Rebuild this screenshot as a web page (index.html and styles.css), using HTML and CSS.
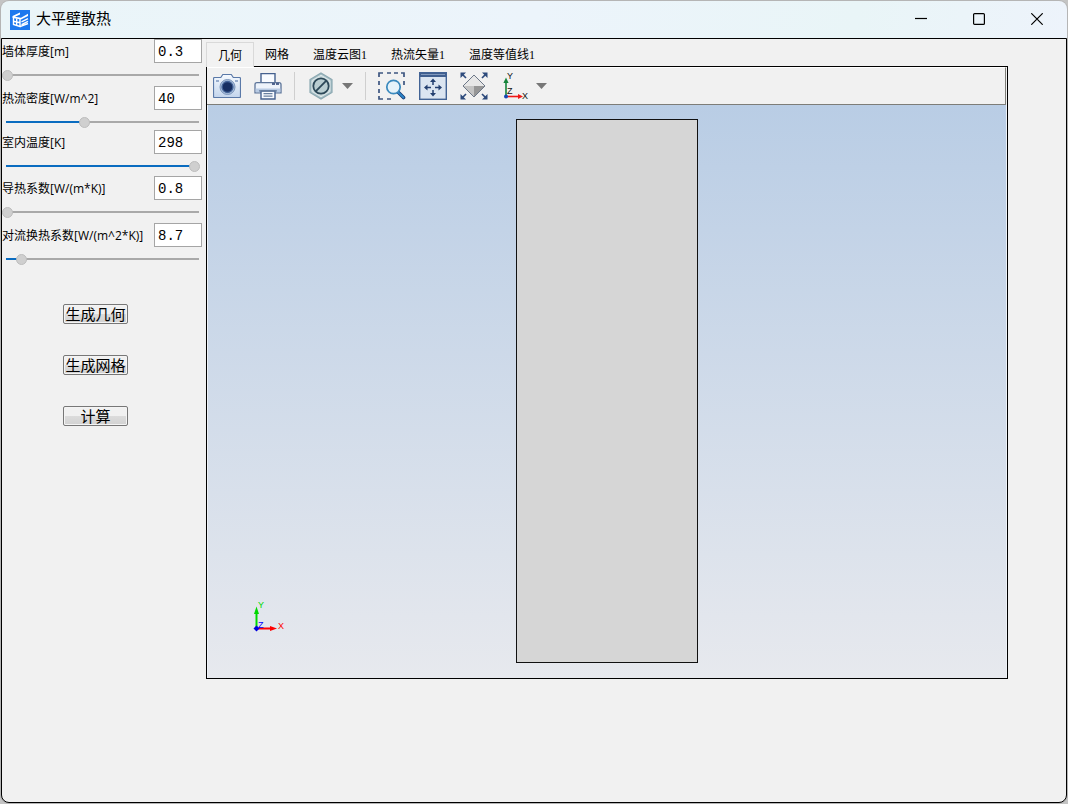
FILE: index.html
```html
<!DOCTYPE html>
<html lang="zh-CN">
<head>
<meta charset="utf-8">
<title>大平壁散热</title>
<link rel="stylesheet" href="styles.css">
</head>
<body>
<div class="window">
  <header class="titlebar">
    <svg class="logo" viewBox="0 0 20 20" aria-hidden="true">
      <rect width="20" height="20" fill="#1c78ee"/>
      <path d="M2.500 6 10 2.500v2L5 6.700l6 1.100 7-4v2.200l-7 3.500L2.500 8z" fill="#fff"/>
      <path d="M3.500 7.500v7l6.500 2V9M6.700 8.500v7M3.500 11.300l6.500 1.500M11.500 11.800 18 8.700M11.500 14.600l6.500-3.200M10 16.700l8-3.200" fill="none" stroke="#fff" stroke-width="1.400"/>
    </svg>
    <h1 class="title">大平壁散热</h1>
    <div class="controls">
      <button class="control" aria-label="最小化"><svg viewBox="0 0 12 12"><path d="M0 5.500h12"/></svg></button>
      <button class="control" aria-label="最大化"><svg viewBox="0 0 12 12"><rect x=".6" y=".6" width="10.800" height="10.800" rx="1"/></svg></button>
      <button class="control" aria-label="关闭"><svg viewBox="0 0 12 12"><path d="M.3.3l11.400 11.400M11.700.3.3 11.700"/></svg></button>
    </div>
  </header>

  <main class="content">
    <form class="panel">
      <div class="fields">
        <div class="field">
          <label for="thick">墙体厚度[m]</label>
          <input class="value" id="thick" type="text" value="0.3">
          <input class="slider" type="range" aria-label="墙体厚度" min="0" max="1000" value="0" style="--fill:0%">
        </div>
        <div class="field">
          <label for="flux">热流密度[W/m^2]</label>
          <input class="value" id="flux" type="text" value="40">
          <input class="slider" type="range" aria-label="热流密度" min="0" max="1000" value="410" style="--fill:41%">
        </div>
        <div class="field">
          <label for="temp">室内温度[K]</label>
          <input class="value" id="temp" type="text" value="298">
          <input class="slider" type="range" aria-label="室内温度" min="0" max="1000" value="1000" style="--fill:98%">
        </div>
        <div class="field">
          <label for="cond">导热系数[W/(m*K)]</label>
          <input class="value" id="cond" type="text" value="0.8">
          <input class="slider" type="range" aria-label="导热系数" min="0" max="1000" value="0" style="--fill:0%">
        </div>
        <div class="field">
          <label for="conv">对流换热系数[W/(m^2*K)]</label>
          <input class="value" id="conv" type="text" value="8.7">
          <input class="slider" type="range" aria-label="对流换热系数" min="0" max="1000" value="75" style="--fill:8%">
        </div>
      </div>
      <div class="actions">
        <button class="action" type="button">生成几何</button>
        <button class="action" type="button">生成网格</button>
        <button class="action" type="button">计算</button>
      </div>
    </form>

    <section class="viewer">
      <nav class="tabs" role="tablist">
        <button class="tab tab-active" role="tab" aria-selected="true">几何</button>
        <button class="tab" role="tab">网格</button>
        <button class="tab" role="tab">温度云图1</button>
        <button class="tab" role="tab">热流矢量1</button>
        <button class="tab" role="tab">温度等值线1</button>
      </nav>
      <div class="frame">
        <div class="toolbar">
          <button class="tool" aria-label="截图">
            <svg width="28" height="28" viewBox="0 0 28 28">
              <defs><linearGradient id="cam" x2="0" y2="1"><stop stop-color="#f6faff"/><stop offset="1" stop-color="#c3d5ec"/></linearGradient></defs>
              <path d="M1.500 5.500h6.300l2-3h8.500l2 3h6.200q1 0 1 1v18q0 1-1 1h-25q-1 0-1-1v-18q0-1 1-1z" fill="url(#cam)" stroke="#5a79a8" stroke-width="1.200"/>
              <path d="M3 9h3M22 9h3" stroke="#7d97bf" stroke-width="1.500"/>
              <circle cx="14.500" cy="15" r="7.500" fill="#a9bfdc" stroke="#7b95bb"/>
              <circle cx="14.500" cy="15" r="5.500" fill="#172f62" stroke="#45659a" stroke-width="1.300"/>
            </svg>
          </button>
          <button class="tool" aria-label="打印">
            <svg width="28" height="28" viewBox="0 0 28 28">
              <path d="M7 11V1.600h14V11" fill="#f8fbff" stroke="#45618f" stroke-width="1.400"/>
              <path d="M3 10.600h22q2 0 2 2v8.200H1v-8.200q0-2 2-2z" fill="#edf3fb" stroke="#5c7499" stroke-width="1.300"/>
              <path d="M1.600 16.500h24.800v3.800H1.600z" fill="#b8cbe4"/>
              <path d="M18 12h3M22 12h3" stroke="#233d70" stroke-width="1.500"/>
              <path d="M7 19h14v8H7z" fill="#f8fbff" stroke="#45618f" stroke-width="1.400"/>
              <path d="M5 18.800h18M9.500 21.700h9M9.500 24.200h9" stroke="#68809f" stroke-width="1.300"/>
            </svg>
          </button>
          <span class="separator"></span>
          <button class="tool" aria-label="选择过滤">
            <svg width="28" height="28" viewBox="0 0 28 28">
              <path d="M14 1 25 7.500v13L14 27 3 20.500V7.500z" fill="#a5bdc4" stroke="#8ca9b2" stroke-width="1.200"/>
              <path d="M14 3.200 23 8.500v11L14 24.800 5 19.500v-11z" fill="#c9d9dc" stroke="#dde8ea"/>
              <circle cx="14" cy="14" r="7.700" fill="#b9cdd1" stroke="#2c4858" stroke-width="1.800"/>
              <path d="M8.700 19.300 19.300 8.700" stroke="#2c4858" stroke-width="1.800"/>
            </svg>
            <svg class="caret" width="12" height="6" viewBox="0 0 12 6"><path d="M1 0h11L6.500 6z"/></svg>
          </button>
          <span class="separator"></span>
          <button class="tool" aria-label="框选缩放">
            <svg width="28" height="28" viewBox="0 0 28 28">
              <path d="M1 5V1h4M9 1h4M16 1h4M23 1h3v4M1 9v4M1 17v4M1 24v3h4M26 9v4M9 27h4" fill="none" stroke="#3c5580" stroke-width="1.700"/>
              <path d="M20.500 20.500 25.500 25.500" stroke="#173a75" stroke-width="3.600" stroke-linecap="round"/>
              <path d="M20.500 20.500 25.500 25.500" stroke="#2c87c9" stroke-width="1.800" stroke-linecap="round"/>
              <circle cx="15.500" cy="15" r="6.700" fill="#e6f3fa" stroke="#3a89bd" stroke-width="1.700"/>
            </svg>
          </button>
          <button class="tool" aria-label="适应窗口">
            <svg width="28" height="28" viewBox="0 0 28 28">
              <rect x=".7" y=".7" width="26.600" height="26.600" fill="#dbe5f1" stroke="#426395" stroke-width="1.400"/>
              <path d="M1 1h26v4H1z" fill="#405f8f"/>
              <path d="M2 2.500h24" stroke="#8199bd"/>
              <path d="M14 8v5M14 18v5M7 15.500h5M16 15.500h5" stroke="#233f70" stroke-width="1.500"/>
              <path d="M14 6.500 17 10h-6zM14 24.500 17 21h-6zM5 15.500 8.500 12.500v6zM23 15.500 19.500 12.500v6z" fill="#233f70"/>
            </svg>
          </button>
          <button class="tool" aria-label="全部显示">
            <svg width="28" height="28" viewBox="0 0 28 28">
              <path d="M14 3 25 14H3z" fill="#e7e7e7"/>
              <path d="M3 14h11v11z" fill="#c4c4c4"/><path d="M14 14h11L14 25z" fill="#969696"/>
              <path d="M14 3 25 14 14 25 3 14z" fill="none" stroke="#6d7888"/>
              <path d="M2 2l4 4M26 2l-4 4M2 26l4-4M26 26l-4-4" stroke="#2d4a7c" stroke-width="1.700"/>
              <path d="M.5.5h5.500L.5 6zM27.500.5H22L27.500 6zM.5 27.500H6L.5 22zM27.500 27.500H22l5.500-5.500z" fill="#2d4a7c"/>
            </svg>
          </button>
          <button class="tool" aria-label="视图方向">
            <svg width="28" height="28" viewBox="0 0 28 28">
              <path d="M5 25V10" stroke="#16853b" stroke-width="1.600"/><path d="M5 5.500 7.600 11H2.400z" fill="#16853b"/>
              <path d="M5 24.500h14" stroke="#f01818" stroke-width="1.600"/><path d="M22 24.500 17 22v5z" fill="#f01818"/>
              <circle cx="5" cy="24.500" r="2" fill="#1646b5"/>
              <g class="axis-name"><text x="6" y="7">Y</text><text x="6" y="22">Z</text><text x="21" y="27">X</text></g>
            </svg>
            <svg class="caret" width="12" height="6" viewBox="0 0 12 6"><path d="M1 0h11L6.500 6z"/></svg>
          </button>
        </div>
        <div class="viewport">
          <div class="wall"></div>
          <svg class="triad" width="38" height="34" viewBox="0 0 38 34">
            <path d="M7.500 28V14" stroke="#00d800" stroke-width="2"/><path d="M7.500 6.500 10 14H5z" fill="#00d800"/>
            <path d="M7 28.500h14" stroke="#f00" stroke-width="2"/><path d="M28 28.500 21 26v5z" fill="#f00"/>
            <path d="M7.500 25.500l3 3-3 3-3-3z" fill="#00d"/>
            <text x="9" y="8" fill="#00d800">Y</text><text x="9" y="28" fill="#00f">Z</text><text x="29" y="29" fill="#f00">X</text>
          </svg>
        </div>
      </div>
    </section>
  </main>
</div>
</body>
</html>
```

FILE: styles.css
```css
* { box-sizing: border-box; }

body {
  margin: 0;
  background: #c4c4c4;
  color: #000;
  font: 12px/16px "Open Sans", "Noto Sans CJK SC", sans-serif;
}

button { font: inherit; color: inherit; }

.window {
  display: flex;
  flex-direction: column;
  min-height: 100vh;
  padding: 1px;
  border-radius: 9px;
  overflow: hidden;
  background: #b5b5b5;
}

.titlebar {
  display: flex;
  align-items: center;
  height: 37px;
  padding-left: 9px;
  border-radius: 8px 8px 0 0;
  background: linear-gradient(100deg, #eaf5f8, #ecf4fb 50%, #e9f5f7 80%, #edf3fb);
}

.logo { width: 20px; height: 20px; }

.title {
  flex: 1;
  margin: 0 0 0 6px;
  padding-bottom: 4px;
  font: 15px/20px "Noto Sans CJK SC", sans-serif;
}

.controls { display: flex; gap: 12px; padding: 0 7px 2px 0; }

.control {
  display: grid;
  place-items: center;
  width: 46px;
  height: 34px;
  padding: 0;
  border: 0;
  background: none;
}

.control svg {
  width: 12px;
  height: 12px;
  fill: none;
  stroke: #000;
  stroke-width: 1.2;
}

.content {
  display: flex;
  flex: 1;
  border: 1px solid #000;
  border-radius: 0 0 8px 8px;
  background: #f1f1f1;
}

.panel { width: 204px; flex: none; }

.fields {
  display: grid;
  grid-template-rows: 47px 44px 46px 47px 44px;
}

.field {
  display: grid;
  grid-template-columns: 1fr 48px;
  grid-template-rows: 24px 16px;
  row-gap: 4px;
  align-content: start;
  padding-right: 4px;
}

.field label {
  align-self: center;
  padding-top: 2px;
  white-space: nowrap;
}

.value {
  width: 48px;
  height: 24px;
  padding: 2px 3px 0;
  border: 1px solid #a5a5a5;
  border-radius: 0;
  background: #fff;
  font: 14px/20px "Liberation Mono", monospace;
}

.slider {
  grid-column: 1 / -1;
  width: 198px;
  height: 16px;
  margin: 0;
  appearance: none;
  background: linear-gradient(90deg, #0a6cc0 var(--fill), #a9a9a9 var(--fill)) 4px 50% / 193px 2px no-repeat;
}

.slider::-webkit-slider-thumb {
  appearance: none;
  width: 11px;
  height: 11px;
  border: 1px solid #bdbdbd;
  border-radius: 50%;
  background: #cfcfcf;
}

.actions {
  display: flex;
  flex-direction: column;
  align-items: flex-start;
  gap: 31px;
  padding: 37px 0 0 61px;
}

.action {
  width: 65px;
  height: 20px;
  padding: 0;
  border: 1px solid #777;
  border-radius: 2px;
  background: linear-gradient(#f1f1f1 50%, #dcdcdc 50%, #d2d2d2);
  box-shadow: inset 0 0 0 1px #f4f4f4;
  font: 15px/16px "Noto Sans CJK SC", sans-serif;
  white-space: nowrap;
}

.viewer {
  display: flex;
  flex: 1;
  flex-direction: column;
  margin: 0 58px 123px 0;
}

.tabs {
  display: flex;
  align-items: flex-end;
  height: 27px;
}

.tab {
  height: 24px;
  padding: 2px 12px 0;
  border: 0;
  background: none;
  font: 12px/22px "Liberation Serif", "Noto Sans CJK SC", serif;
  white-space: nowrap;
}

.tab-active {
  height: 25px;
  margin: 0 -1px -1px 0;
  padding: 1px 11px 0;
  border: 1px solid #d9d9d9;
  border-bottom: 0;
  background: #f2f2f2;
  z-index: 1;
}

.frame {
  display: flex;
  flex: 1;
  flex-direction: column;
  border: 1px solid #000;
}

.toolbar {
  display: flex;
  align-items: center;
  gap: 13px;
  height: 38px;
  margin-right: 1px;
  padding-left: 6px;
  border-top: 1px solid #fff;
  border-right: 1px solid #7d7d78;
  border-bottom: 1px solid #7d7d78;
}

.tool {
  display: flex;
  align-items: center;
  gap: 6px;
  padding: 0;
  border: 0;
  background: none;
}

.caret { fill: #777; }

.separator {
  width: 1px;
  height: 28px;
  margin: 0 -1px;
  background: #cfcfcf;
}

.axis-name {
  font: 9px "Liberation Sans", sans-serif;
  fill: #111;
}

.viewport {
  position: relative;
  display: flex;
  flex: 1;
  justify-content: center;
  padding: 14px 0 15px;
  border: solid #eef2f7;
  border-width: 0 1px;
  background: linear-gradient(#b9cde5, #e7e9ee);
}

.wall {
  width: 182px;
  border: 1px solid #111;
  background: #d6d6d6;
}

.triad {
  position: absolute;
  left: 41px;
  bottom: 44px;
  font: 9px "Liberation Sans", sans-serif;
}
```
